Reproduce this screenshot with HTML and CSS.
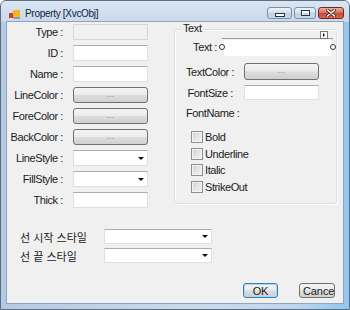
FILE: index.html
```html
<!DOCTYPE html>
<html lang="ko">
<head>
    <meta charset="UTF-8">
    <title>Property [XvcObj]</title>
    <link rel="stylesheet" href="styles.css">
</head>
<body>

    <div class="window">
        <div class="titlebar">
            <svg class="app-icon" width="11" height="9" viewBox="0 0 11 9">
                <rect x="0" y="3" width="5" height="5" fill="#d23a2a"/>
                <rect x="4" y="0" width="7" height="7" fill="#f2b523"/>
                <rect x="5" y="7" width="6" height="2" fill="#7f9cc4"/>
            </svg>
            <span class="title">Property [XvcObj]</span>
            <div class="caption-btns">
                <span class="cap cap-min"><i></i></span>
                <span class="cap cap-max"><i></i></span>
                <span class="cap cap-close">
                    <svg width="10" height="8" viewBox="0 0 10 8">
                        <path d="M1.5 1 L8.5 7 M8.5 1 L1.5 7" stroke="#5a1d15" stroke-width="3" stroke-linecap="round"/>
                        <path d="M1.5 1 L8.5 7 M8.5 1 L1.5 7" stroke="#fff" stroke-width="1.6" stroke-linecap="round"/>
                    </svg>
                </span>
            </div>
        </div>

        <div class="client">
            <div class="top">
                <div class="props">
                    <label>Type :</label><span class="box disabled"></span>
                    <label>ID :</label><span class="box"></span>
                    <label>Name :</label><span class="box"></span>
                    <label>LineColor :</label><span class="btn dots">...</span>
                    <label>ForeColor :</label><span class="btn dots">...</span>
                    <label>BackColor :</label><span class="btn dots">...</span>
                    <label>LineStyle :</label><span class="box combo"></span>
                    <label>FillStyle :</label><span class="box combo"></span>
                    <label>Thick :</label><span class="box"></span>
                </div>

                <div class="groupbox">
                    <span class="group-title">Text</span>
                    <div class="g-row g-text">
                        <label class="g-label short">Text :</label>
                        <div class="sel">
                            <span class="box"></span>
                            <i class="handle left"></i>
                            <i class="handle right"></i>
                            <span class="smart-tag"></span>
                        </div>
                    </div>
                    <div class="g-row g-color">
                        <label class="g-label">TextColor :</label>
                        <span class="btn dots">...</span>
                    </div>
                    <div class="g-row g-size">
                        <label class="g-label">FontSize :</label>
                        <span class="box"></span>
                    </div>
                    <div class="g-fontname">FontName :</div>
                    <ul class="checks">
                        <li><span class="check"></span>Bold</li>
                        <li><span class="check"></span>Underline</li>
                        <li><span class="check"></span>Italic</li>
                        <li><span class="check"></span>StrikeOut</li>
                    </ul>
                </div>
            </div>

            <div class="line-styles">
                <label>선 시작 스타일</label><span class="box combo"></span>
                <label>선 끝 스타일</label><span class="box combo"></span>
            </div>

            <div class="actions">
                <span class="btn default">OK</span>
                <span class="btn cancel">Cancel</span>
            </div>
        </div>
    </div>

</body>
</html>
```

FILE: styles.css
```css
body { margin: 0; width: 350px; height: 310px; overflow: hidden; font-family: 'Liberation Sans', Arial, sans-serif; font-size: 11px; letter-spacing: -0.4px; color: #1b1b1b; background: #fff; }

/* window frame */
.window { box-sizing: border-box; width: 350px; height: 310px; border: 1px solid #5f6d80; border-radius: 6px 6px 0 0; background: linear-gradient(to right, #b4c9e3, #cbdaec 55%, #bcd6ef 85%, #8fc7f0); display: flex; flex-direction: column; }
.titlebar { height: 21px; display: flex; align-items: flex-start; padding-left: 8px; background: linear-gradient(#dbe6f3, #cad8ea); border-radius: 5px 5px 0 0; }
.app-icon { margin-top: 9px; }
.title { margin-left: 5px; margin-top: 7px; font-size: 10px; letter-spacing: -0.3px; color: #10233d; }
.caption-btns { margin-left: auto; margin-right: 5px; margin-top: 6px; display: flex; gap: 2px; }
.cap { box-sizing: border-box; height: 12px; border: 1px solid #7b8ea8; border-radius: 3px; display: flex; justify-content: center; align-items: center; background: linear-gradient(#eef3f9, #d6e1ee 45%, #bfd0e4 50%, #c9d9ec); }
.cap-min { width: 25px; }
.cap-max { width: 22px; }
.cap-close { width: 26px; border-color: #6b2a22; background: linear-gradient(#eab1a4, #d4715f 45%, #c24a37 50%, #d46a52); }
.cap-min i { width: 8px; height: 2px; margin-top: 4px; border: 1px solid #24344b; background: #fff; }
.cap-max i { width: 7px; height: 4px; border: 1px solid #24344b; box-shadow: inset 0 1px 0 1px #fff; }

/* client area */
.client { flex: 1; margin: 0 6px 6px; background: #f0f0f0; box-shadow: 0 0 0 1px #8da3bf; display: flex; flex-direction: column; }
.top { display: flex; align-items: flex-start; }
.props { display: grid; grid-template-columns: 56px 75px; grid-auto-rows: 16px; column-gap: 10px; row-gap: 5px; padding-top: 2px; align-items: center; }
.props label { text-align: right; white-space: nowrap; }

/* controls */
.box { box-sizing: border-box; display: block; height: 16px; background: #fff; border: 1px solid #dbdfe6; border-top-color: #abadb3; position: relative; }
.box.disabled { background: #f0f0f0; border-color: #d7d7d7; }
.combo::after { content: ''; position: absolute; right: 3px; top: 6px; border-left: 3px solid transparent; border-right: 3px solid transparent; border-top: 3px solid #111; }
.btn { box-sizing: border-box; display: flex; justify-content: center; align-items: center; height: 16px; border: 1px solid #707070; border-radius: 3px; background: linear-gradient(#f4f4f4, #ebebeb 48%, #dddddd 52%, #d0d0d0); white-space: nowrap; overflow: hidden; }
.dots { color: #707070; font-size: 8px; letter-spacing: 0.5px; padding-bottom: 2px; }

/* text group */
.groupbox { box-sizing: border-box; position: relative; width: 163px; height: 175px; margin: 7px 0 0 26px; padding: 8px 0 0 11px; border: 1px solid #d5dfe5; border-radius: 3px; box-shadow: inset 1px 1px 0 #fff, 1px 1px 0 #fff; }
.group-title { position: absolute; top: -8px; left: 6px; padding: 0 2px; background: #f0f0f0; }
.g-row { display: flex; align-items: center; }
.g-label { width: 47px; text-align: right; margin-right: 11px; white-space: nowrap; }
.g-label.short { width: 31px; margin-right: 5px; }
.g-text { height: 18px; }
.sel { position: relative; box-sizing: border-box; width: 111px; height: 18px; padding: 1px 2px; border-top: 1px solid #9a9a9a; }
.sel .box { height: 16px; border: none; }
.handle { position: absolute; top: 5px; width: 4px; height: 4px; border: 1px solid #333; border-radius: 50%; background: #fff; }
.handle.left { left: -3px; }
.handle.right { right: -3px; }
.smart-tag { position: absolute; top: -8px; right: 5px; box-sizing: border-box; width: 8px; height: 8px; border: 1px solid #777; background: #fbfbfb; }
.smart-tag::after { content: ''; position: absolute; left: 2px; top: 1px; border-top: 2px solid transparent; border-bottom: 2px solid transparent; border-left: 2px solid #111; }
.g-color { margin-top: 7px; }
.g-color .btn { width: 75px; height: 17px; }
.g-size { margin-top: 5px; }
.g-size .box { width: 75px; height: 15px; }
.g-fontname { margin-top: 7px; height: 13px; line-height: 13px; }
.checks { list-style: none; margin: 9px 0 0; padding: 0 0 0 5px; }
.checks li { display: flex; align-items: center; height: 16.5px; }
.check { box-sizing: border-box; width: 12px; height: 12px; margin-right: 2px; border: 1px solid #8e8f8f; background: linear-gradient(135deg, #cfd1d4, #f6f6f6); box-shadow: inset 0 0 0 1px #f3f3f3; }

/* bottom rows */
.line-styles { display: grid; grid-template-columns: 84px 108px; grid-auto-rows: 15px; row-gap: 4px; margin-top: 21px; padding-left: 13px; align-items: center; }
.line-styles label { font-family: 'Noto Sans CJK KR', sans-serif; font-size: 11px; letter-spacing: 0; }
.line-styles .box { height: 15px; }
.line-styles .combo::after { top: 5px; }

.actions { display: flex; justify-content: flex-end; gap: 21px; margin-top: 20px; padding-right: 8px; }
.actions .btn { height: 15px; width: 35px; letter-spacing: -0.1px; }
.btn.default { border-color: #3c7fb1; box-shadow: inset 0 0 0 1px #9fdcf8; }
.btn.cancel { width: 36px; justify-content: flex-start; padding-left: 3px; }
```
